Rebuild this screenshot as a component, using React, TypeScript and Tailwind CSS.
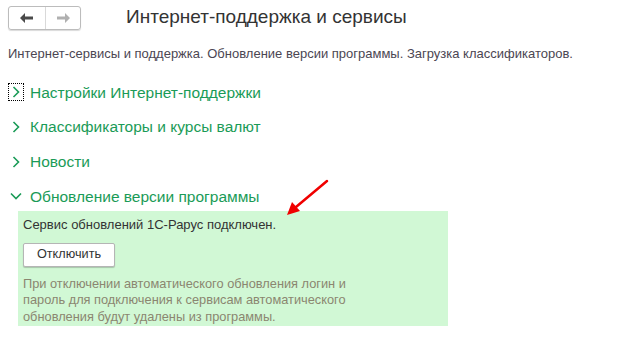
const sections = [
  "Настройки Интернет-поддержки",
  "Классификаторы и курсы валют",
  "Новости",
];

const Chevron = ({ open }: { open?: boolean }) =>
  open ? (
    <svg width="12" height="8" viewBox="0 0 12 8">
      <polyline points="1,1.5 6,6.5 11,1.5" fill="none" stroke="#1a9b57" strokeWidth="1.6" />
    </svg>
  ) : (
    <svg width="8" height="12" viewBox="0 0 8 12">
      <polyline points="1.5,1 6.5,6 1.5,11" fill="none" stroke="#1a9b57" strokeWidth="1.6" />
    </svg>
  );

const App = () => {
  return (
    <div className="relative w-[640px] h-[345px] bg-white px-2 font-['Liberation_Sans',Arial,sans-serif]">
      {/* Header */}
      <div className="flex items-start pt-[6px]">
        <div className="flex h-[24px] w-[73px] rounded-[3px] border border-[#bcbcbc] shadow-[0_1px_1px_rgba(0,0,0,0.15)]">
          <div className="flex w-[37px] items-center justify-center border-r border-[#d9d9d9]">
            <svg width="14" height="10" viewBox="0 0 14 10">
              <path d="M0 5 L5 0 L5 3.5 L13 3.5 L13 6.5 L5 6.5 L5 10 Z" fill="#4a4a4a" />
            </svg>
          </div>
          <div className="flex flex-1 items-center justify-center">
            <svg width="14" height="10" viewBox="0 0 14 10">
              <path d="M14 5 L9 0 L9 3.5 L1 3.5 L1 6.5 L9 6.5 L9 10 Z" fill="#b0b0b0" />
            </svg>
          </div>
        </div>
        <h1 className="ml-[45px] mt-[-1px] text-[19px] leading-[24px] text-[#333]">
          Интернет-поддержка и сервисы
        </h1>
      </div>

      <p className="mt-[16px] text-[13px] leading-[16px] text-[#4b4652]">
        Интернет-сервисы и поддержка. Обновление версии программы. Загрузка классификаторов.
      </p>

      {/* Sections */}
      <div className="mt-[13px] flex flex-col">
        {sections.map((s, i) => (
          <div key={s} className="flex h-[34.7px] items-center">
            <div
              className={`flex h-[18px] w-[16px] items-center justify-center ${
                i === 0 ? "border border-dotted border-black" : ""
              }`}
            >
              <Chevron />
            </div>
            <span className="ml-[6px] text-[15.5px] text-[#1a9b57]">{s}</span>
          </div>
        ))}
        <div className="flex h-[34.7px] items-center">
          <div className="flex h-[18px] w-[16px] items-center justify-center">
            <Chevron open />
          </div>
          <span className="ml-[6px] text-[15.5px] text-[#1a9b57]">
            Обновление версии программы
          </span>
        </div>
      </div>

      {/* Panel */}
      <div className="ml-[10px] mt-[-3px] h-[115px] w-[430px] bg-[#d1f8d5] px-[5px] pt-[6px]">
        <p className="text-[13px] leading-[16px] text-[#333]">
          Сервис обновлений 1С-Рарус подключен.
        </p>
        <button className="mt-[10px] h-[24px] w-[92px] rounded-[2px] border border-[#b5b5b5] bg-white text-[12.7px] text-[#333] shadow-[0_1px_1px_rgba(0,0,0,0.2)]">
          Отключить
        </button>
        <p className="mt-[9px] text-[12.8px] leading-[16.5px] text-[#8b8670]">
          При отключении автоматического обновления логин и
          <br />
          пароль для подключения к сервисам автоматического
          <br />
          обновления будут удалены из программы.
        </p>
      </div>

      {/* Red arrow annotation */}
      <svg
        className="absolute left-0 top-0 pointer-events-none"
        width="640"
        height="345"
      >
        <line x1="327" y1="181" x2="296" y2="207" stroke="#f00000" strokeWidth="2.5" strokeLinecap="round" />
        <path d="M287 215 L292 202 L300 211 Z" fill="#f00000" />
      </svg>
    </div>
  );
};

export default App;
